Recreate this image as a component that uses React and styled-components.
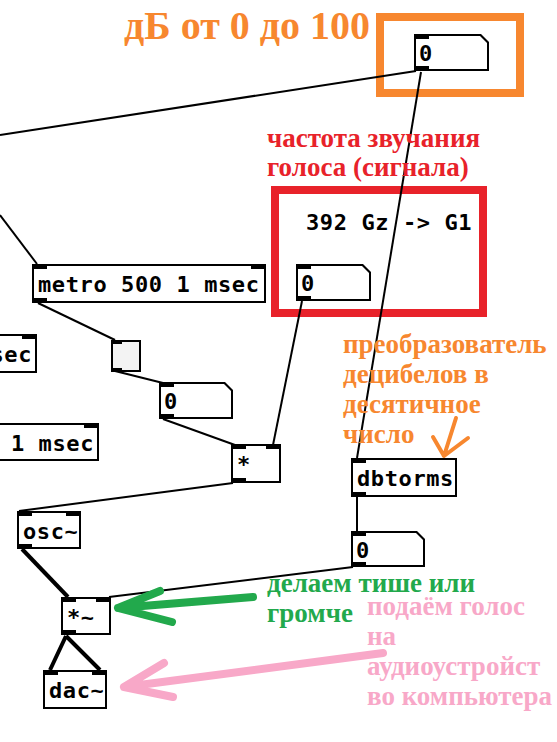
import React from "react";
import styled, { createGlobalStyle } from "styled-components";

const GlobalStyle = createGlobalStyle`
  html, body {
    margin: 0;
    padding: 0;
    background: #fff;
  }
`;

const colors = {
  orange: "#f7872f",
  red: "#e8222a",
  green: "#22a94c",
  pink: "#f8a8c8",
  ink: "#000",
};

const Canvas = styled.div`
  position: relative;
  width: 557px;
  height: 742px;
  overflow: hidden;
  background: #fff;
`;

const Placed = styled.div.attrs((p) => ({
  style: { left: p.$x, top: p.$y, width: p.$w, height: p.$h },
}))`
  position: absolute;
  box-sizing: border-box;
`;

const Frame = styled(Placed)`
  border: 8px solid ${(p) => p.$color};
`;

const ObjectBox = styled(Placed)`
  display: flex;
  align-items: center;
  justify-content: ${(p) => (p.$end ? "flex-end" : "flex-start")};
  padding: 3px 3px 0 4px;
  border: 2px solid ${colors.ink};
  background: #fff;
  font: bold 22px/1 "DejaVu Sans Mono", monospace;
  letter-spacing: 0.6px;
  white-space: nowrap;
`;

const NumberBox = styled(Placed)`
  display: flex;
  align-items: center;
  padding: 3px 0 0 5px;
  background: ${colors.ink};
  clip-path: polygon(0 0, calc(100% - 8px) 0, 100% 8px, 100% 100%, 0 100%);
  font: bold 22px/1 "DejaVu Sans Mono", monospace;

  &::before {
    content: "";
    position: absolute;
    inset: 2px;
    background: #fff;
    clip-path: polygon(0 0, calc(100% - 7px) 0, 100% 7px, 100% 100%, 0 100%);
  }
`;

const NumberText = styled.span`
  position: relative;
  z-index: 1;
`;

const Bang = styled(Placed)`
  border: 2px solid ${colors.ink};
  background: #f3f3f3;
`;

const Port = styled.span`
  position: absolute;
  z-index: 2;
  width: ${(p) => p.$w || 15}px;
  height: ${(p) => (p.$w ? 4 : 5)}px;
  background: ${colors.ink};
  ${(p) => (p.$right ? `right: ${p.$o}px;` : `left: ${p.$o}px;`)}
  ${(p) => (p.$bottom ? `bottom: ${p.$o}px;` : `top: ${p.$o}px;`)}
`;

const Comment = styled(Placed)`
  font: bold 22px/24px "DejaVu Sans Mono", monospace;
  letter-spacing: 0.6px;
  white-space: nowrap;
`;

const Note = styled(Placed)`
  color: ${(p) => p.$color};
  font: bold ${(p) => p.$size || 27}px / ${(p) => p.$lh || 30}px "Liberation Serif", "Times New Roman", serif;
  white-space: pre;
`;

const Layer = styled.svg`
  position: absolute;
  left: 0;
  top: 0;
  width: 557px;
  height: 742px;
  overflow: visible;
  pointer-events: none;
`;

const objects = [
  { text: "metro 500 1 msec", x: 32, y: 264, w: 234, h: 39, ports: ["tl", "tr", "bl"] },
  { text: "msec", x: -40, y: 334, w: 77, h: 39, ports: ["tl", "tr", "bl"], end: true },
  { text: "0 1 msec", x: -40, y: 423, w: 139, h: 38, ports: ["tl", "tr", "bl"], end: true },
  { text: "*", x: 231, y: 444, w: 50, h: 39, ports: ["tl", "tr", "bl"] },
  { text: "osc~", x: 17, y: 511, w: 64, h: 38, ports: ["tl", "tr", "bl"] },
  { text: "*~", x: 61, y: 597, w: 50, h: 38, ports: ["tl", "tr", "bl"] },
  { text: "dac~", x: 43, y: 670, w: 64, h: 39, ports: ["tl", "tr"] },
  { text: "dbtorms", x: 351, y: 458, w: 106, h: 39, ports: ["tl", "bl"] },
];

const numbers = [
  { x: 414, y: 34, w: 75, h: 37 },
  { x: 296, y: 264, w: 75, h: 37 },
  { x: 159, y: 382, w: 74, h: 37 },
  { x: 351, y: 531, w: 74, h: 36 },
];

const wires = [
  { d: "M0 135 L416 71", w: 2 },
  { d: "M421 72 L357 458", w: 2 },
  { d: "M0 215 L37 264", w: 2 },
  { d: "M38 303 L115 340", w: 2 },
  { d: "M115 371 L163 383", w: 2 },
  { d: "M163 419 L235 445", w: 2 },
  { d: "M302 301 L273 445", w: 2 },
  { d: "M233 483 L19 511", w: 2 },
  { d: "M22 549 L68 597", w: 4 },
  { d: "M109 597 L353 567", w: 2 },
  { d: "M357 497 L357 531", w: 2 },
  { d: "M66 636 L50 670 M66 636 L100 670", w: 4 },
];

const arrows = [
  { d: "M253 597 L118 608 M160 591 L118 608 L172 622", color: colors.green, w: 8 },
  { d: "M383 653 L124 687 M164 663 L124 687 L173 697", color: colors.pink, w: 8 },
  { d: "M456 418 L444 456 M433 437 L444 456 L468 438", color: colors.orange, w: 4 },
];

const ports = (list, o, w) =>
  list.map((p) => (
    <Port key={p} $o={o} $w={w} $right={p[1] === "r"} $bottom={p[0] === "b"} />
  ));

export default function App() {
  return (
    <>
      <GlobalStyle />
      <Canvas>
        <Frame $x={376} $y={13} $w={148} $h={84} $color={colors.orange} />
        <Frame $x={271} $y={186} $w={216} $h={131} $color={colors.red} />

        <Layer viewBox="0 0 557 742">
          {wires.map((wr, i) => (
            <path key={i} d={wr.d} stroke={colors.ink} strokeWidth={wr.w} fill="none" />
          ))}
        </Layer>

        {objects.map((ob) => (
          <ObjectBox key={ob.text} $x={ob.x} $y={ob.y} $w={ob.w} $h={ob.h} $end={ob.end}>
            {ports(ob.ports, -2)}
            {ob.text}
          </ObjectBox>
        ))}

        {numbers.map((n, i) => (
          <NumberBox key={i} $x={n.x} $y={n.y} $w={n.w} $h={n.h}>
            {ports(["tl", "bl"], 0)}
            <NumberText>0</NumberText>
          </NumberBox>
        ))}

        <Bang $x={111} $y={340} $w={30} $h={32}>
          {ports(["tl", "bl"], -2, 11)}
        </Bang>

        <Comment $x={306} $y={211}>392 Gz -&gt; G1</Comment>

        <Note $x={124} $y={6} $size={40} $lh={40} $color={colors.orange}>
          дБ от 0 до 100
        </Note>
        <Note $x={267} $y={124} $lh={29} $color={colors.red}>
          {"частота звучания\nголоса (сигнала)"}
        </Note>
        <Note $x={343} $y={329} $color={colors.orange}>
          {"преобразователь\nдецибелов в\nдесятичное\nчисло"}
        </Note>
        <Note $x={267} $y={568} $color={colors.green}>
          {"делаем тише или\nгромче"}
        </Note>
        <Note $x={367} $y={591} $color={colors.pink}>
          {"подаём голос\nна\nаудиоустройст\nво компьютера"}
        </Note>

        <Layer viewBox="0 0 557 742">
          {arrows.map((a, i) => (
            <path
              key={i}
              d={a.d}
              stroke={a.color}
              strokeWidth={a.w}
              strokeLinecap="round"
              strokeLinejoin="round"
              fill="none"
            />
          ))}
        </Layer>
      </Canvas>
    </>
  );
}
